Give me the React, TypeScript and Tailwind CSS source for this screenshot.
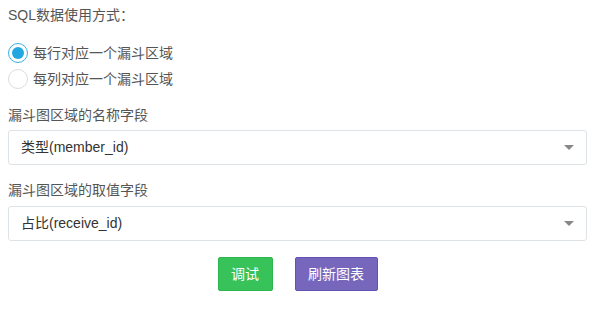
import React from "react";

const font = { fontFamily: '"Liberation Sans", "Noto Sans CJK SC", sans-serif' };

function Radio({ checked, label }: { checked?: boolean; label: string }) {
  return (
    <div className="flex items-center h-[26px]">
      <span
        className={
          checked
            ? "w-[20px] h-[20px] rounded-full border border-[#3aafe0] bg-white flex items-center justify-center"
            : "w-[20px] h-[20px] rounded-full border border-[#d9dde0] bg-white"
        }
      >
        {checked && <span className="w-[12px] h-[12px] rounded-full bg-[#22a7e0]" />}
      </span>
      <span className="ml-[5px] text-[14px] text-[#555]">{label}</span>
    </div>
  );
}

function Select({ value }: { value: string }) {
  return (
    <div className="flex items-center justify-between h-[35px] mr-[13px] border border-[#dde3e6] rounded-[3px] bg-white pl-[12px] pr-[12px]">
      <span className="text-[14px] text-[#333]">{value}</span>
      <svg width="10" height="6" viewBox="0 0 10 6">
        <path d="M0 0 L10 0 L5 5 Z" fill="#888" />
      </svg>
    </div>
  );
}

export default function App() {
  return (
    <div className="w-[600px] h-[311px] bg-white pl-[8px]" style={font}>
      <div className="h-[30px] flex items-center text-[14px] text-[#555]">SQL数据使用方式：</div>
      <div className="mt-[10px] flex flex-col">
        <Radio checked label="每行对应一个漏斗区域" />
        <Radio label="每列对应一个漏斗区域" />
      </div>
      <div className="mt-[10px] h-[26px] flex items-center text-[14px] text-[#555]">漏斗图区域的名称字段</div>
      <div className="mt-[2px]">
        <Select value="类型(member_id)" />
      </div>
      <div className="mt-[12px] h-[26px] flex items-center text-[14px] text-[#555]">漏斗图区域的取值字段</div>
      <div className="mt-[3px]">
        <Select value="占比(receive_id)" />
      </div>
      <div className="mt-[16px] flex justify-center gap-[22px] pr-[13px]">
        <button className="w-[55px] h-[34px] rounded-[2px] border border-[#2db54e] bg-[#37c25a] text-white text-[14px]">
          调试
        </button>
        <button className="w-[83px] h-[34px] rounded-[2px] border border-[#6152b3] bg-[#7767bc] text-white text-[14px]">
          刷新图表
        </button>
      </div>
    </div>
  );
}
